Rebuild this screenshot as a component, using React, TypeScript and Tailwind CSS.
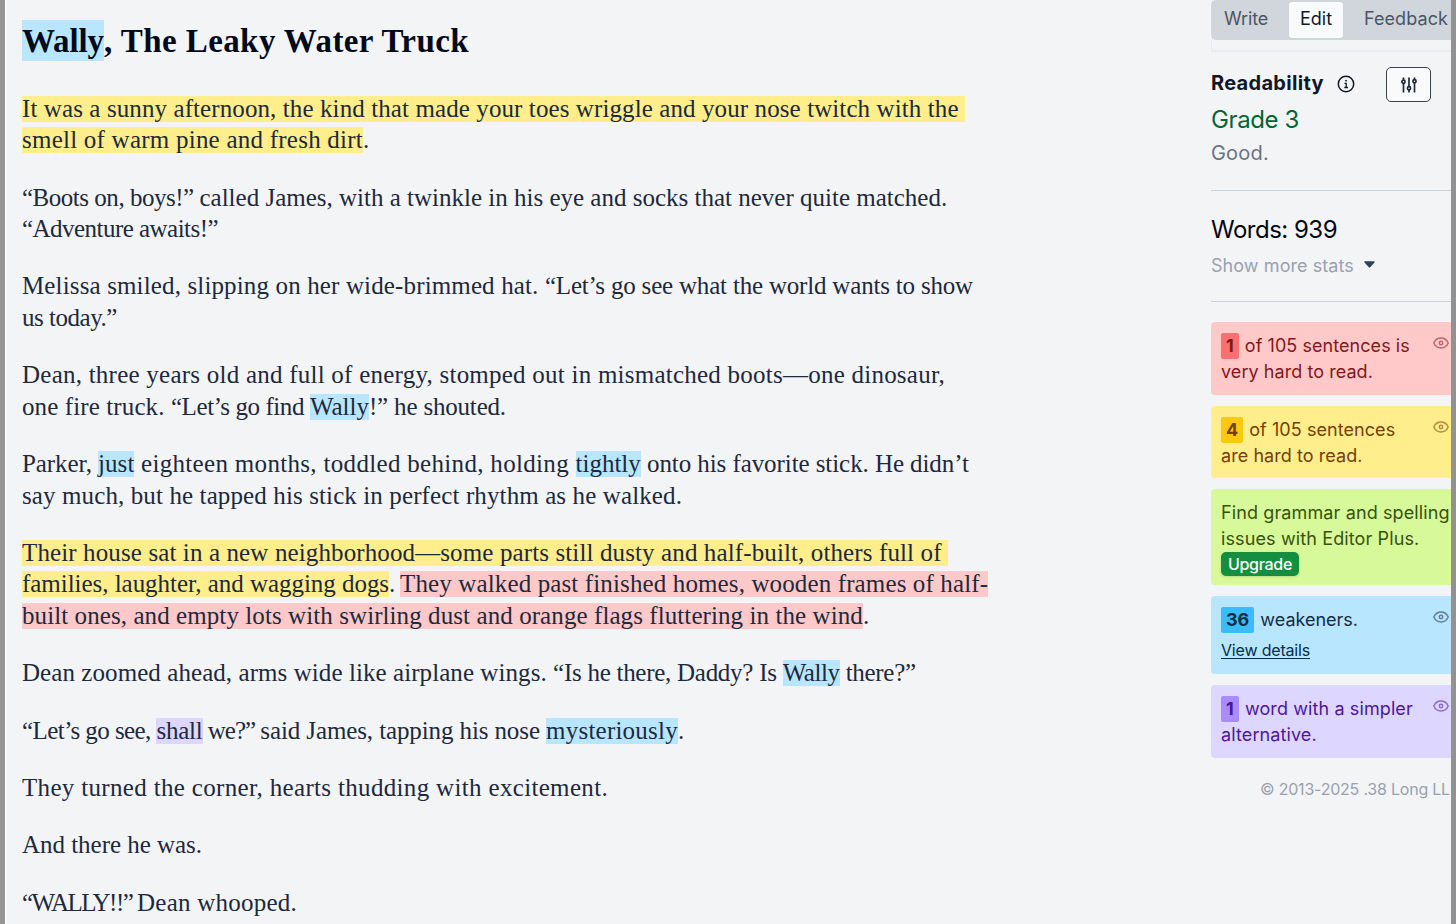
import type { ReactNode } from 'react'
import clsx from 'clsx'

type Mark = 'hard' | 'veryHard' | 'weak' | 'simpler'

interface Run {
  text: string
  mark?: Mark
  tracking?: string
}

const markColors: Record<Mark, string> = {
  hard: 'bg-[#ffee8b]',
  veryHard: 'bg-[#ffc9c9]',
  weak: 'bg-[#b8e6fe]',
  simpler: 'bg-[#ddd6ff]',
}

// Each paragraph is a list of lines, each line a list of runs
const paragraphs: Run[][][] = [
  [
    [{ text: 'It was a sunny afternoon, the kind that made your toes wriggle and your nose twitch with the ', mark: 'hard', tracking: 'tracking-[0.098px]' }],
    [
      { text: 'smell of warm pine and fresh dirt', mark: 'hard', tracking: 'tracking-[0.236px]' },
      { text: '.', tracking: 'tracking-[-1px]' },
    ],
  ],
  [
    [
      { text: '“Boots on, boys!” ', tracking: 'tracking-[-0.48px]' },
      { text: 'called James, with a twinkle in his eye and socks that never quite matched.' },
    ],
    [{ text: '“Adventure awaits!”', tracking: 'tracking-[-0.53px]' }],
  ],
  [
    [
      { text: 'Melissa smiled, slipping on her wide-brimmed hat. ', tracking: 'tracking-[0.14px]' },
      { text: '“Let’s go see what the world wants to show', tracking: 'tracking-[-0.19px]' },
    ],
    [{ text: 'us today.”', tracking: 'tracking-[-0.48px]' }],
  ],
  [
    [{ text: 'Dean, three years old and full of energy, stomped out in mismatched boots—one dinosaur,', tracking: 'tracking-[0.238px]' }],
    [
      { text: 'one fire truck. ', tracking: 'tracking-[0.11px]' },
      { text: '“Let’s go find ', tracking: 'tracking-[-0.41px]' },
      { text: 'Wally', mark: 'weak' },
      { text: '!” he shouted.', tracking: 'tracking-[-0.186px]' },
    ],
  ],
  [
    [
      { text: 'Parker, ', tracking: 'tracking-[-0.1px]' },
      { text: 'just', mark: 'weak', tracking: 'tracking-[0.1px]' },
      { text: ' eighteen months, toddled behind, holding ', tracking: 'tracking-[0.317px]' },
      { text: 'tightly', mark: 'weak' },
      { text: ' onto his favorite stick. He didn’t', tracking: 'tracking-[-0.077px]' },
    ],
    [{ text: 'say much, but he tapped his stick in perfect rhythm as he walked.', tracking: 'tracking-[0.114px]' }],
  ],
  [
    [{ text: 'Their house sat in a new neighborhood—some parts still dusty and half-built, others full of ', mark: 'hard', tracking: 'tracking-[0.118px]' }],
    [
      { text: 'families, laughter, and wagging dogs', mark: 'hard', tracking: 'tracking-[-0.036px]' },
      { text: '. ', tracking: 'tracking-[-0.75px]' },
      { text: 'They walked past finished homes, wooden frames of half-', mark: 'veryHard', tracking: 'tracking-[0.127px]' },
    ],
    [
      { text: 'built ones, and empty lots with swirling dust and orange flags fluttering in the wind', mark: 'veryHard', tracking: 'tracking-[0.082px]' },
      { text: '.' },
    ],
  ],
  [
    [
      { text: 'Dean zoomed ahead, arms wide like airplane wings. ', tracking: 'tracking-[0.07px]' },
      { text: '“Is he there, Daddy? Is ', tracking: 'tracking-[-0.27px]' },
      { text: 'Wally', mark: 'weak', tracking: 'tracking-[-0.4px]' },
      { text: ' there?”', tracking: 'tracking-[-0.3px]' },
    ],
  ],
  [
    [
      { text: '“Let’s go see, ', tracking: 'tracking-[-0.57px]' },
      { text: 'shall', mark: 'simpler', tracking: 'tracking-[-0.24px]' },
      { text: ' we?” ', tracking: 'tracking-[-1px]' },
      { text: 'said James, tapping his nose ', tracking: 'tracking-[-0.11px]' },
      { text: 'mysteriously', mark: 'weak', tracking: 'tracking-[0.23px]' },
      { text: '.' },
    ],
  ],
  [[{ text: 'They turned the corner, hearts thudding with excitement.', tracking: 'tracking-[0.329px]' }]],
  [[{ text: 'And there he was.', tracking: 'tracking-[-0.03px]' }]],
  [
    [
      { text: '“WALLY!!” ', tracking: 'tracking-[-1.5px]' },
      { text: 'Dean whooped.', tracking: 'tracking-[0.23px]' },
    ],
  ],
]

function Line({ runs }: { runs: Run[] }) {
  return (
    <div className="flex h-[31.5px] items-center">
      {runs.map((run, i) => (
        <span
          key={i}
          className={clsx('h-[26px] shrink-0 leading-[26px]', run.mark && markColors[run.mark], run.tracking)}
        >
          {run.text}
        </span>
      ))}
    </div>
  )
}

function Eye() {
  return (
    <svg
      viewBox="0 0 16 12"
      className="absolute top-[15px] right-[2px] h-3 w-4 fill-none stroke-current opacity-55"
      strokeWidth="1.5"
    >
      <path d="M0.8 6C2.3 2.7 5 1 8 1s5.7 1.7 7.2 5C13.7 9.3 11 11 8 11S2.3 9.3 0.8 6Z" />
      <circle cx="8" cy="6" r="1.7" />
    </svg>
  )
}

interface CardProps {
  className: string
  badge?: string
  badgeColor?: string
  children: ReactNode
}

function Card({ className, badge, badgeColor, children }: CardProps) {
  return (
    <div className={clsx('relative shrink-0 rounded-l-[4px] pt-[11px] pl-[10px] text-[18px] leading-[26px] whitespace-pre', className)}>
      {badge && (
        <span className={clsx('mr-[6px] inline-block h-[26px] rounded-[2px] px-[5px] font-bold', badgeColor)}>{badge}</span>
      )}
      {children}
      {badge && <Eye />}
    </div>
  )
}

function Sidebar() {
  return (
    <aside className="flex w-[240px] shrink-0 flex-col font-['Inter',sans-serif] whitespace-nowrap">
      <div className="flex h-10 shrink-0 items-center rounded-l-[5px] bg-[#d1d5dc] text-[18px] leading-[26px] text-[#4a5565]">
        <span className="w-[78px] pb-[2px] pl-[13px] tracking-[-0.1px]">Write</span>
        <span className="flex h-9 w-[54px] items-center justify-center rounded-[3px] bg-[#f9fafb] pb-[2px] text-[#101828]">Edit</span>
        <span className="pb-[2px] pl-[21px] tracking-[0.07px]">Feedback</span>
      </div>
      <div className="h-3 shrink-0 border-b-2 border-l border-[#e9ebee]" />

      <div className="flex h-[50px] shrink-0 items-end">
        <h2 className="h-[31px] w-[126px] text-[20px] leading-[24px] font-bold tracking-[0.3px] text-[#101828]">Readability</h2>
        <svg viewBox="0 0 18 18" className="mb-[9px] size-[18px] fill-none stroke-[#101828]" strokeWidth="1.5">
          <circle cx="9" cy="9" r="7.7" />
          <path d="M7.5 8.3h1.7v4M7.3 12.5h3.7" strokeWidth="1.3" />
          <circle cx="9" cy="5.7" r="0.6" className="fill-[#101828]" strokeWidth="0.7" />
        </svg>
        <button className="ml-[31px] flex h-[35px] w-[45px] items-center justify-center rounded-[5px] border border-[#364153] bg-[#f9fafb]">
          <svg viewBox="0 0 16 16" className="size-4 fill-none stroke-[#1e2939]" strokeWidth="1.7">
            <path d="M2.5 0.5v2.5M2.5 6.5v9M8 0.5v9M8 13v2.5M13.5 0.5v2M13.5 6v9.5" />
            <circle cx="2.5" cy="4.8" r="1.6" />
            <circle cx="8" cy="11.2" r="1.6" />
            <circle cx="13.5" cy="4.2" r="1.6" />
          </svg>
        </button>
      </div>
      <p className="h-9 shrink-0 text-[24px] leading-[36px] tracking-[-0.38px] text-[#016630]">Grade 3</p>
      <p className="h-[52px] shrink-0 text-[20px] leading-[31px] tracking-[0.2px] text-[#6a7282]">Good.</p>

      <div className="flex h-[112px] shrink-0 flex-col border-y border-[#cad0dc] pt-[22px]">
        <p className="text-[24px] leading-[34px] tracking-[-0.5px] text-[#030712]">Words: 939</p>
        <p className="flex items-center gap-[10px] text-[18px] leading-[38px] tracking-[0.07px] text-[#99a1af]">
          Show more stats
          <svg viewBox="0 0 11 7" className="mb-[3px] h-[7px] w-[11px] fill-[#314158]">
            <path d="M1 0.3h9c.7 0 1 .7.5 1.2L6.2 6.2c-.4.4-1 .4-1.4 0L.5 1.5C0 1 .3.3 1 .3Z" />
          </svg>
        </p>
      </div>

      <div className="mt-5 flex flex-col gap-[11px]">
        <Card className="h-[73px] bg-[#ffc9c9] tracking-[0.06px] text-[#82181a]" badge="1" badgeColor="bg-[#fb6f72]">
          of 105 sentences is
          <br />
          very hard to read.
        </Card>
        <Card className="h-[72px] bg-[#ffee8b] tracking-[0.065px] text-[#733e0a]" badge="4" badgeColor="bg-[#fbc914]">
          of 105 sentences
          <br />
          are hard to read.
        </Card>
        <Card className="h-[96px] bg-[#d8f999] tracking-[0.12px] text-[#35530e]">
          Find grammar and spelling
          <br />
          issues with Editor Plus.
          <button className="block h-6 w-[78px] rounded-[5px] bg-[#148f40] text-[16px] leading-[23px] font-medium tracking-[-0.3px] text-white shadow-sm">
            Upgrade
          </button>
        </Card>
        <Card className="h-[78px] bg-[#b8e6fe] text-[#162b44]" badge="36" badgeColor="bg-[#38bdf8]">
          weakeners.
          <a className="mt-[5px] block text-[16px] leading-[25px] tracking-[-0.18px] text-[#052f4a] underline underline-offset-2">View details</a>
        </Card>
        <Card className="h-[73px] bg-[#ddd6ff] tracking-[0.11px] text-[#4d179a]" badge="1" badgeColor="bg-[#a98bfb]">
          word with a simpler
          <br />
          alternative.
        </Card>
      </div>

      <footer className="mt-[19px] pl-[49px] text-[16px] leading-[24px] tracking-[-0.22px] text-[#99a1af]">
        © 2013-2025 .38 Long LL
      </footer>
    </aside>
  )
}

export default function App() {
  return (
    <div className="flex h-[924px] w-[1456px] overflow-hidden bg-[#f3f4f6]">
      <div className="w-[5px] shrink-0 bg-[#969696]" />
      <div className="flex w-[1446px] shrink-0 overflow-hidden border-l border-white">
        <main className="w-[1205px] shrink-0 pl-4 font-['Liberation_Serif',serif] whitespace-pre text-[#1d293d]">
          <h1 className="flex pt-5 text-[33px] leading-[43px] font-bold text-[#030a1c]">
            <span className="h-[41px] bg-[#b8e6fe] tracking-[-0.1px]">Wally</span>
            <span className="tracking-[0.417px]">, The Leaky Water Truck</span>
          </h1>
          <div className="mt-[30px] flex flex-col gap-[25.85px] text-[25px]">
            {paragraphs.map((lines, i) => (
              <div key={i}>
                {lines.map((runs, j) => (
                  <Line key={j} runs={runs} />
                ))}
              </div>
            ))}
          </div>
        </main>
        <Sidebar />
      </div>
      <div className="w-[5px] shrink-0 bg-[#929292]" />
    </div>
  )
}
